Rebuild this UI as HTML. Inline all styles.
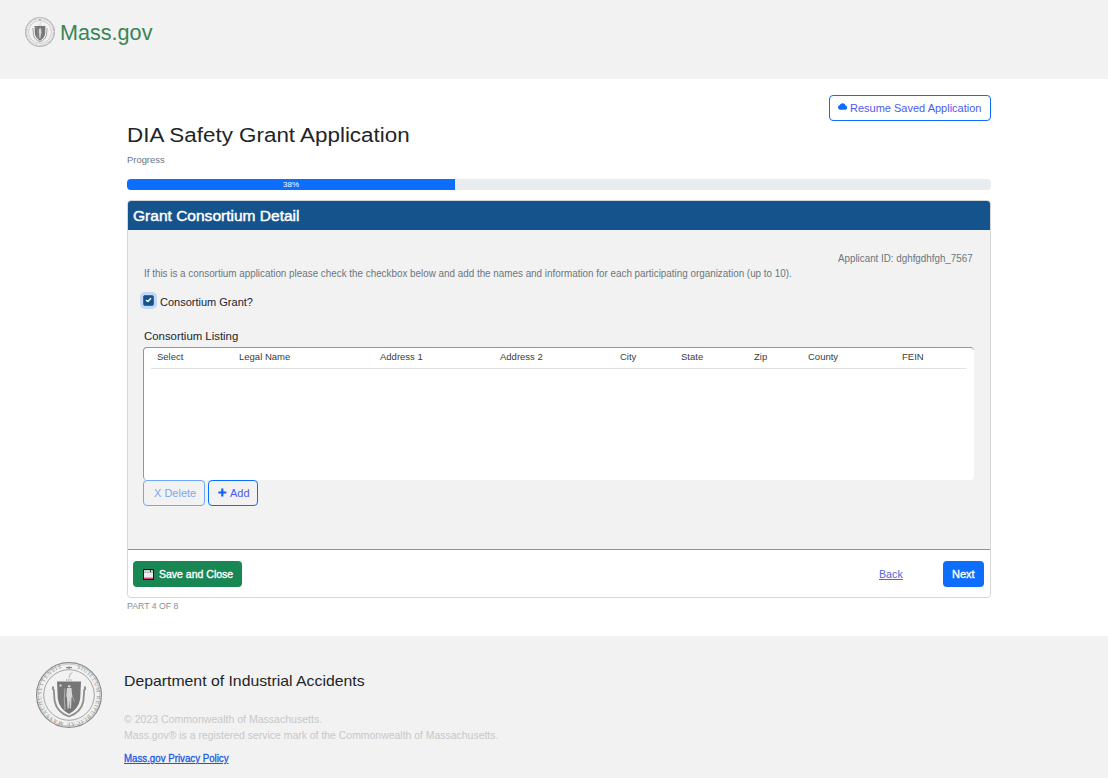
<!DOCTYPE html>
<html><head><meta charset="utf-8">
<style>
*{box-sizing:border-box;margin:0;padding:0}
html,body{width:1108px;height:778px;overflow:hidden;background:#fff;font-family:"Liberation Sans",sans-serif;color:#212529}
.t{position:absolute;white-space:nowrap;line-height:1;transform-origin:0 0}
#hdr{position:absolute;left:0;top:0;width:1108px;height:79px;background:#f2f2f2}
#logo{left:60px;top:22px;font-size:22.5px;color:#388557;transform:scaleX(0.96)}
#resume{position:absolute;left:829px;top:95px;width:162px;height:26px;border:1px solid #0d6efd;border-radius:4px}
#resume .t{left:20px;top:7px;font-size:11px;color:#4a5cf0}
#title{left:127px;top:125px;font-size:20px;color:#212529;transform:scaleX(1.12)}
#prog{left:127px;top:156px;font-size:9px;color:#6c757d;transform:scaleX(1.045)}
#bar{position:absolute;left:127px;top:179px;width:864px;height:11px;background:#e9ecef;border-radius:4px;overflow:hidden}
#fill{position:absolute;left:0;top:0;width:328px;height:11px;background:#0d6efd;color:#fff;font-size:8px;line-height:11px;text-align:center}
#card{position:absolute;left:127px;top:200px;width:864px;height:398px;border:1px solid #d6d6d6;border-radius:4px;overflow:hidden;background:#fff}
#chead{position:absolute;left:0;top:0;width:862px;height:29px;background:#14538c}
#chead .t{left:5px;top:6.5px;font-size:15px;color:#fff;-webkit-text-stroke:0.45px #fff;transform:scaleX(1.035)}
#cbody{position:absolute;left:0;top:29px;width:862px;height:320px;background:#f2f2f2;border-bottom:1px solid #6f9ac4}
.gray{color:#6c757d}
#tbl{position:absolute;left:15px;top:117px;width:831px;height:133px;background:#fff;border-top:1px solid #959595;border-left:1px solid #959595;border-radius:4px}
#tbl .t{top:4px;font-size:9.5px;color:#3b3b3b}
#tline{position:absolute;left:7px;top:20px;width:815px;height:1px;background:#dee2e6}
.btn{position:absolute;height:26px;border-radius:4px}
#foot{position:absolute;left:0;top:636px;width:1108px;height:142px;background:#f2f2f2}
</style></head>
<body>
<svg width="0" height="0" style="position:absolute">
  <defs>
    <path id="ringp" d="M33 5.3 A27.7 27.7 0 1 1 32.99 5.3"/>
    <symbol id="seal" viewBox="0 0 66 66">
      <circle cx="33" cy="33" r="32.4" fill="none" stroke="#8a8a8a" stroke-width="1.2"/>
      <circle cx="33" cy="33" r="30.8" fill="none" stroke="#b4b4b4" stroke-width="0.6"/>
      <circle cx="33" cy="33" r="25.3" fill="none" stroke="#9a9a9a" stroke-width="0.9"/>
      <text font-family="Liberation Serif" font-size="5.6" fill="#8a8a8a"><textPath href="#ringp" startOffset="8" textLength="158" lengthAdjust="spacing">SIGILLUM REIPUBLICAE MASSACHUSETTENSIS</textPath></text>
      <path d="M30 5.6 H36" stroke="#8a8a8a" stroke-width="1.3"/><circle cx="33" cy="5.6" r="1.2" fill="#8a8a8a"/>
      <path d="M17.5 24.5 Q16 26.5 17.8 28 L18.6 39 Q21 50.5 33 54.5 Q45 50.5 47.4 39 L48.2 28 Q50 26.5 48.5 24.5" fill="none" stroke="#8e8e8e" stroke-width="1.8"/>
      <path d="M21 19.6 H45 L44.2 37 Q42.5 47 33 52 Q23.5 47 21.8 37 Z" fill="#767676"/>
      <circle cx="24.5" cy="23.5" r="1.2" fill="#cfcfcf"/>
      <circle cx="33.2" cy="24.2" r="1.3" fill="#d6d6d6"/>
      <path d="M31 26 H35.5 L36.2 34 L35.5 36 L35 46.5 H33.8 L33.3 37.5 L32.8 46.5 H31.5 L31 36 L30.3 34 Z" fill="#d6d6d6"/>
      <path d="M29 26.5 Q27.5 37 29 48" fill="none" stroke="#c8c8c8" stroke-width="0.7"/>
      <path d="M36 33 L38.5 40" stroke="#c8c8c8" stroke-width="0.6"/>
      <path d="M30 18 H36" stroke="#888" stroke-width="1" stroke-dasharray="1.2 1"/>
      <path d="M33 16.5 L34 12 L36.5 10.5" fill="none" stroke="#aaa" stroke-width="0.8"/>
    </symbol>
  </defs>
</svg>
<div id="hdr">
  <svg style="position:absolute;left:25px;top:17px" width="30" height="30"><use href="#seal"/></svg>
  <div class="t" id="logo">Mass.gov</div>
</div>

<div id="resume">
  <svg style="position:absolute;left:7.9px;top:5.8px" width="9.4" height="9.4" viewBox="0 0 16 16"><path d="M4.406 3.342A5.53 5.53 0 0 1 8 2c2.69 0 4.923 2 5.166 4.579C14.758 6.804 16 8.137 16 9.773 16 11.569 14.502 13 12.687 13H3.781C1.708 13 0 11.366 0 9.318c0-1.763 1.266-3.223 2.942-3.593.143-.863.698-1.723 1.464-2.383z" fill="#0d6efd"/></svg>
  <div class="t">Resume Saved Application</div>
</div>
<div class="t" id="title">DIA Safety Grant Application</div>
<div class="t" id="prog">Progress</div>
<div id="bar"><div id="fill">38%</div></div>

<div id="card">
  <div id="chead"><div class="t">Grant Consortium Detail</div></div>
  <div id="cbody">
    <div class="t gray" style="left:710px;top:24px;font-size:10px;transform:scaleX(0.98)">Applicant ID: dghfgdhfgh_7567</div>
    <div class="t gray" style="left:16px;top:39px;font-size:10px;transform:scaleX(0.985)">If this is a consortium application please check the checkbox below and add the names and information for each participating organization (up to 10).</div>
    <div style="position:absolute;left:15px;top:65px;width:11px;height:11px;border-radius:2px;background:#14538c;border:1px solid #0d6efd;box-shadow:0 0 0 3px rgba(13,110,253,.2)"></div>
    <svg style="position:absolute;left:15px;top:65px" width="11" height="11" viewBox="0 0 11 11"><path d="M3.4 5.4 L4.9 6.5 L7.7 3.6" fill="none" stroke="#fff" stroke-width="1.4" stroke-linecap="round" stroke-linejoin="round"/></svg>
    <div class="t" style="left:32px;top:67px;font-size:11px;color:#212529">Consortium Grant?</div>
    <div class="t" style="left:16px;top:101px;font-size:11px;color:#212529;transform:scaleX(1.035)">Consortium Listing</div>
    <div id="tbl">
      <div class="t" style="left:13px">Select</div>
      <div class="t" style="left:95px">Legal Name</div>
      <div class="t" style="left:236px">Address 1</div>
      <div class="t" style="left:356px">Address 2</div>
      <div class="t" style="left:476px">City</div>
      <div class="t" style="left:537px">State</div>
      <div class="t" style="left:610px">Zip</div>
      <div class="t" style="left:664px">County</div>
      <div class="t" style="left:758px">FEIN</div>
      <div id="tline"></div>
    </div>
    <div class="btn" style="left:15px;top:250px;width:62px;border:1px solid #6ea5fd">
      <div class="t" style="left:10px;top:7px;font-size:11px;color:#7aa7f5">X Delete</div>
    </div>
    <div class="btn" style="left:80px;top:250px;width:50px;border:1px solid #0d6efd">
      <svg style="position:absolute;left:9px;top:7px" width="9" height="9" viewBox="0 0 9 9"><path d="M4.3 0.5 V8.5 M0.3 4.5 H8.3" stroke="#0d62f0" stroke-width="2.2"/></svg>
      <div class="t" style="left:21px;top:7px;font-size:11px;color:#4a5cf0">Add</div>
    </div>
  </div>
  <div class="btn" style="left:5px;top:360px;width:109px;background:#198754">
    <svg style="position:absolute;left:10px;top:8px" width="11" height="11" viewBox="0 0 11 11"><rect x="0" y="0" width="11" height="11" rx="0.6" fill="#151515"/><rect x="1" y="1" width="9" height="9" fill="#ececec"/><rect x="1" y="1" width="9" height="3" fill="#bdbdbd"/><rect x="1.5" y="1.3" width="7.5" height="1.8" fill="#d8d8d8"/><rect x="7" y="1" width="0.9" height="2.2" fill="#222"/><rect x="1" y="8.6" width="9" height="1.4" fill="#e23b7c"/></svg>
    <div class="t" style="left:25.5px;top:8px;font-size:11px;color:#fff;-webkit-text-stroke:0.35px #fff;transform:scaleX(0.955)">Save and Close</div>
  </div>
  <div class="t" style="left:751px;top:368px;font-size:11px;color:#5561e0;text-decoration:underline;transform:scaleX(0.97)">Back</div>
  <div class="btn" style="left:815px;top:360px;width:41px;background:#0d6efd">
    <div class="t" style="left:9px;top:8px;font-size:11px;color:#fff;-webkit-text-stroke:0.35px #fff">Next</div>
  </div>
</div>
<div class="t" style="left:127px;top:602px;font-size:9px;color:#8a8f94;transform:scaleX(0.97)">PART 4 OF 8</div>

<div id="foot">
  <svg style="position:absolute;left:36px;top:26px" width="66" height="66"><use href="#seal"/></svg>
  <div class="t" style="left:124px;top:37px;font-size:15px;color:#212529;transform:scaleX(1.053)">Department of Industrial Accidents</div>
  <div class="t" style="left:124px;top:78px;font-size:11px;color:#c8c8c8;transform:scaleX(0.958)">© 2023 Commonwealth of Massachusetts.</div>
  <div class="t" style="left:124px;top:94px;font-size:11px;color:#c8c8c8;transform:scaleX(0.949)">Mass.gov® is a registered service mark of the Commonwealth of Massachusetts.</div>
  <div class="t" style="left:124px;top:118px;font-size:10px;color:#1a5ae0;-webkit-text-stroke:0.3px #1a5ae0;text-decoration:underline;transform:scaleX(0.97)">Mass.gov Privacy Policy</div>
</div>
</body></html>
